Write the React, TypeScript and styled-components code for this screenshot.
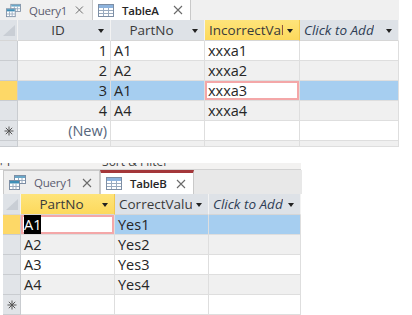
import styled, { createGlobalStyle } from "styled-components"

const GlobalStyle = createGlobalStyle`
  html, body {
    margin: 0;
    padding: 0;
    background: #ffffff;
  }
  body {
    font-family: "Open Sans", "Noto Sans", sans-serif;
    width: 412px;
    height: 315px;
    overflow: hidden;
  }
`

type Col = {
    label: string
    width: number
    align?: "left" | "right" | "center"
    italic?: boolean
    active?: boolean
}

type Row = {
    cells: string[]
    selected?: boolean
    isNew?: boolean
    editCol?: number
    highlightEdit?: boolean
    partial?: boolean
}

const Page = styled.div`
    display: flex;
    flex-direction: column;
    width: 412px;
    height: 315px;
    overflow: hidden;
`

const Window = styled.div<{ $width: number; $left: number }>`
    width: ${p => p.$width}px;
    margin-left: ${p => p.$left}px;
    display: flex;
    flex-direction: column;
`

const TabStrip = styled.div<{ $height: number; $bg: string }>`
    display: flex;
    height: ${p => p.$height}px;
    background: ${p => p.$bg};
    align-items: stretch;
    box-sizing: border-box;
`

const Tab = styled.div<{ $width: number; $active?: boolean; $boxed?: boolean; $accent?: boolean }>`
    width: ${p => p.$width}px;
    box-sizing: border-box;
    display: flex;
    align-items: center;
    padding: 0 7px 0 5px;
    gap: 8px;
    font-size: 11.5px;
    color: ${p => (p.$active ? "#262626" : "#5b5b6e")};
    font-weight: ${p => (p.$active ? 600 : 400)};
    border-left: 1px solid ${p => (p.$active || p.$boxed ? "#c9c9c9" : "transparent")};
    border-right: 1px solid ${p => (p.$active || p.$boxed ? "#c9c9c9" : "transparent")};
    border-top: ${p => (p.$accent ? "3px solid #a4373a" : p.$boxed ? "1px solid #c9c9c9" : "none")};
    background: ${p => (p.$active ? "#ffffff" : p.$boxed ? "#eeeeee" : "transparent")};

    span {
        flex: 1;
        letter-spacing: -0.2px;
    }
`

const Grid = styled.div<{ $cols: string }>`
    display: grid;
    grid-template-columns: ${p => p.$cols};
    font-size: 14.5px;
    color: #262626;
`

const HeaderCell = styled.div<{ $align?: string; $italic?: boolean; $active?: boolean }>`
    position: relative;
    height: 21px;
    box-sizing: border-box;
    display: flex;
    align-items: center;
    justify-content: ${p => (p.$align === "left" ? "flex-start" : "center")};
    padding: 0 16px 0 4px;
    font-size: 13.5px;
    font-style: ${p => (p.$italic ? "italic" : "normal")};
    color: ${p => (p.$italic ? "#2e3d55" : "#3a3a3a")};
    background: ${p => (p.$active ? "linear-gradient(#fee47a, #fdd95c)" : "#dee2e7")};
    border-right: 1px solid ${p => (p.$active ? "#f2c94c" : "#f3f3f3")};
    border-bottom: 1px solid #d6d6d6;
`

const HeaderLabel = styled.span`
    white-space: nowrap;
    overflow: hidden;
`

const Arrow = styled.i`
    position: absolute;
    right: 6px;
    top: 9px;
    width: 0;
    height: 0;
    border-left: 3.5px solid transparent;
    border-right: 3.5px solid transparent;
    border-top: 4px solid #222;
`

const Corner = styled.div`
    height: 21px;
    box-sizing: border-box;
    background: #dee2e7;
    border-right: 1px solid #f3f3f3;
    border-bottom: 1px solid #d6d6d6;
    display: flex;
    align-items: flex-end;
    padding: 0 0 4px 3px;
`

const Selector = styled.div<{ $selected?: boolean; $height: number }>`
    height: ${p => p.$height}px;
    box-sizing: border-box;
    background: ${p => (p.$selected ? "#fdd867" : "#e1e4e8")};
    border-right: 1px solid #c9ccd0;
    border-bottom: 1px solid #c9ccd0;
    display: flex;
    align-items: center;
    justify-content: center;
`

const Cell = styled.div<{ $bg: string; $align?: string; $edit?: boolean; $height: number; $muted?: boolean }>`
    height: ${p => p.$height}px;
    box-sizing: border-box;
    background: ${p => p.$bg};
    border-right: 1px solid #dedede;
    border-bottom: 1px solid #dedede;
    box-shadow: ${p => (p.$edit ? "inset 0 0 0 2px #f4a7a8" : "none")};
    display: flex;
    align-items: center;
    justify-content: ${p => (p.$align === "right" ? "flex-end" : "flex-start")};
    padding: 0 3px;
    color: ${p => (p.$muted ? "#56667c" : "#262626")};
    white-space: nowrap;
    overflow: hidden;
`

const Marked = styled.span`
    background: #000;
    color: #fff;
`

const Ribbon = styled.div`
    width: 301px;
    height: 11px;
    margin-top: 16px;
    background: #f3f2f1;
    border-bottom: 1px solid #d2d2d2;
    overflow: hidden;
    font-size: 12px;
    color: #444;
    display: flex;
    gap: 92px;
`

const RibbonText = styled.span`
    margin-top: -8px;
    line-height: 14px;
    white-space: nowrap;
`

const TableIcon = () => (
    <svg width="16" height="13" viewBox="0 0 16 13">
        <rect x="0.5" y="0.5" width="15" height="12" fill="#fff" stroke="#7d8ea4" />
        <rect x="1" y="1" width="14" height="3" fill="#8db3dd" />
        <path d="M5.5 4v8M10.5 4v8M1 6.5h14M1 9.5h14" stroke="#9aabbf" strokeWidth="1" />
    </svg>
)

const QueryIcon = () => (
    <svg width="17" height="15" viewBox="0 0 17 15">
        <rect x="5.5" y="0.5" width="11" height="8" fill="#fff" stroke="#7d8ea4" />
        <rect x="6" y="1" width="10" height="2" fill="#6aa7c8" />
        <path d="M9.5 3v5M13 3v5M6 5.5h10" stroke="#9aabbf" />
        <rect x="0.5" y="5.5" width="10" height="9" fill="#fff" stroke="#7d8ea4" />
        <rect x="1" y="6" width="9" height="2.5" fill="#3f8fb7" />
        <path d="M4 8.5v6M7 8.5v6M1 11.5h9" stroke="#9aabbf" />
    </svg>
)

const CloseIcon = () => (
    <svg width="10" height="10" viewBox="0 0 10 10">
        <path d="M1 1l8 8M9 1l-8 8" stroke="#6a6a6a" strokeWidth="1.1" />
    </svg>
)

const Star = () => (
    <svg width="10" height="10" viewBox="0 0 10 10">
        <path d="M5 0.5v9M0.5 5h9M1.8 1.8l6.4 6.4M8.2 1.8l-6.4 6.4" stroke="#555" strokeWidth="1" />
    </svg>
)

const CornerMark = () => (
    <svg width="12" height="11" viewBox="0 0 12 11">
        <path d="M12 0L12 11L0 11Z" fill="#c9ced5" />
    </svg>
)

type SheetProps = {
    cols: Col[]
    rows: Row[]
}

const Datasheet = ({ cols, rows }: SheetProps) => {
    const template = "18px " + cols.map(c => c.width + "px").join(" ")
    return (
        <Grid $cols={template}>
            <Corner><CornerMark /></Corner>
            {cols.map(c => (
                <HeaderCell key={c.label} $align={c.align} $italic={c.italic} $active={c.active}>
                    <HeaderLabel>{c.label}</HeaderLabel>
                    <Arrow />
                </HeaderCell>
            ))}
            {rows.map((r, i) => {
                const h = r.partial ? 6 : 20
                const stripe = i % 2 === 1 ? "#f0f0f0" : "#ffffff"
                return [
                    <Selector key={"s" + i} $selected={r.selected} $height={h}>
                        {r.isNew && <Star />}
                    </Selector>,
                    ...cols.map((c, j) => {
                        const edit = r.editCol === j
                        const bg = edit ? "#ffffff" : r.selected ? "#a6cef0" : stripe
                        const text = r.cells[j] || ""
                        return (
                            <Cell
                                key={i + "-" + j}
                                $bg={bg}
                                $align={j === 0 && cols[0].align === "right" ? "right" : "left"}
                                $edit={edit}
                                $height={h}
                                $muted={r.isNew}
                            >
                                {edit && r.highlightEdit ? <Marked>{text}</Marked> : text}
                            </Cell>
                        )
                    }),
                ]
            })}
        </Grid>
    )
}

// headers as Access shows them, cut to the column width
const topCols: Col[] = [
    { label: "ID", width: 93, align: "right" },
    { label: "PartNo", width: 94 },
    { label: "IncorrectVal", width: 95, align: "left", active: true },
    { label: "Click to Add", width: 99, align: "left", italic: true },
]

const topRows: Row[] = [
    { cells: ["1", "A1", "xxxa1"] },
    { cells: ["2", "A2", "xxxa2"] },
    { cells: ["3", "A1", "xxxa3"], selected: true, editCol: 2 },
    { cells: ["4", "A4", "xxxa4"] },
    { cells: ["(New)"], isNew: true },
    { cells: [], partial: true },
]

const bottomCols: Col[] = [
    { label: "PartNo", width: 94, active: true },
    { label: "CorrectValu", width: 94, align: "left" },
    { label: "Click to Add", width: 92, align: "left", italic: true },
]

const bottomRows: Row[] = [
    { cells: ["A1", "Yes1"], selected: true, editCol: 0, highlightEdit: true },
    { cells: ["A2", "Yes2"] },
    { cells: ["A3", "Yes3"] },
    { cells: ["A4", "Yes4"] },
    { cells: [], isNew: true },
]

export default function App() {
    return (
        <Page>
            <GlobalStyle />
            <Window $width={399} $left={0}>
                <TabStrip $height={20} $bg="#f0f0f0">
                    <Tab $width={92}><QueryIcon /><span>Query1</span><CloseIcon /></Tab>
                    <Tab $width={99} $active><TableIcon /><span>TableA</span><CloseIcon /></Tab>
                </TabStrip>
                <Datasheet cols={topCols} rows={topRows} />
            </Window>
            <Ribbon>
                <RibbonText>⌐ı</RibbonText>
                <RibbonText>Sort &amp; Filter</RibbonText>
            </Ribbon>
            <Window $width={299} $left={3}>
                <TabStrip $height={24} $bg="#e8e8e8">
                    <Tab $width={97} $boxed><QueryIcon /><span>Query1</span><CloseIcon /></Tab>
                    <Tab $width={94} $active $accent><TableIcon /><span>TableB</span><CloseIcon /></Tab>
                </TabStrip>
                <Datasheet cols={bottomCols} rows={bottomRows} />
            </Window>
        </Page>
    )
}
